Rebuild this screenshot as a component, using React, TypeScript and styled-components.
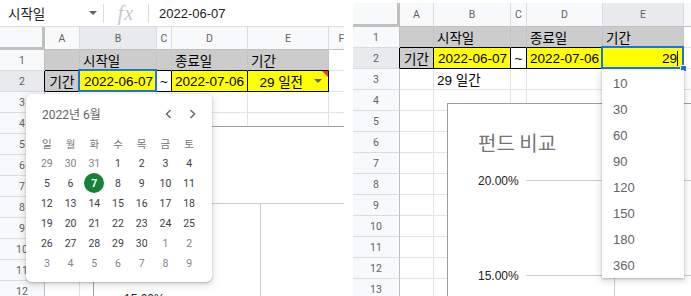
import React from 'react';
import styled, { createGlobalStyle } from 'styled-components';

const Global = createGlobalStyle`
  html, body { margin: 0; padding: 0; background: #fff; }
  body { font-family: "Liberation Sans", Arial, "Noto Sans CJK KR", sans-serif; }
`;

const CELL_FONT = `"Liberation Sans", Arial, "Noto Sans CJK KR", sans-serif`;
const UI_FONT = `Roboto, "Liberation Sans", "Noto Sans CJK KR", sans-serif`;

const Page = styled.div`
  display: flex;
  gap: 9px;
  width: 691px;
  height: 296px;
  overflow: hidden;
`;

const Panel = styled.div<{ $w: number }>`
  flex: none;
  width: ${p => p.$w}px;
  height: 296px;
  display: flex;
  flex-direction: column;
  overflow: hidden;
`;

const TopStrip = styled.div`
  flex: none;
  height: 3px;
`;

/* ---------- formula bar ---------- */
const FormulaBar = styled.div`
  flex: none;
  height: 27px;
  box-sizing: border-box;
  border-bottom: 1px solid #dadce0;
  display: flex;
  align-items: center;
  font-family: ${CELL_FONT};
`;

const NameBox = styled.div`
  width: 103px;
  box-sizing: border-box;
  padding: 0 6px 0 8px;
  display: flex;
  align-items: center;
  justify-content: space-between;
  font-size: 13.5px;
  color: #202124;
`;

const Caret = styled.span<{ $size?: number; $color?: string }>`
  width: 0;
  height: 0;
  border-left: ${p => p.$size ?? 4}px solid transparent;
  border-right: ${p => p.$size ?? 4}px solid transparent;
  border-top: ${p => p.$size ?? 4}px solid ${p => p.$color ?? '#5f6368'};
`;

const BarDivider = styled.div`
  width: 1px;
  height: 19px;
  background: #dadce0;
`;

const FxBox = styled.div`
  width: 44px;
  display: flex;
  justify-content: center;
  font-family: "Liberation Serif", serif;
  font-style: italic;
  font-size: 20px;
  color: #c4c7cc;
  letter-spacing: 1px;
`;

const FormulaText = styled.div`
  padding-left: 10px;
  font-size: 13px;
  color: #202124;
`;

/* ---------- sheet ---------- */
const SheetArea = styled.div`
  position: relative;
  flex: 1;
  overflow: hidden;
`;

const Grid = styled.div<{ $cols: string; $hdr: number }>`
  display: grid;
  grid-template-columns: ${p => p.$cols};
  grid-template-rows: ${p => p.$hdr}px;
  grid-auto-rows: 21px;
  font-family: ${CELL_FONT};
`;

const Corner = styled.div`
  box-sizing: border-box;
  background: #f8f9fa;
  border-right: 3px solid #c0c0c0;
  border-bottom: 3px solid #c0c0c0;
`;

const ColHeader = styled.div<{ $active?: boolean }>`
  box-sizing: border-box;
  background: ${p => (p.$active ? '#e8eaed' : '#f8f9fa')};
  border-right: 1px solid #dadce0;
  border-bottom: 1px solid #c0c0c0;
  display: flex;
  align-items: center;
  justify-content: center;
  font-size: 10.5px;
  color: #5f6368;
  font-family: ${UI_FONT};
`;

const RowHeader = styled.div<{ $active?: boolean; $rc?: string }>`
  box-sizing: border-box;
  background: ${p => (p.$active ? '#e8eaed' : '#f8f9fa')};
  border-right: 1px solid ${p => p.$rc ?? '#c0c0c0'};
  border-bottom: 1px solid #dadce0;
  display: flex;
  align-items: center;
  justify-content: center;
  font-size: 10.5px;
  color: #5f6368;
  font-family: ${UI_FONT};
`;

const Cell = styled.div<{ $bg?: string; $justify?: string; $rc?: string; $bc?: string; $pad?: string; $gap?: number }>`
  position: relative;
  box-sizing: border-box;
  background: ${p => p.$bg ?? '#fff'};
  border-right: 1px solid ${p => p.$rc ?? '#e2e3e3'};
  border-bottom: 1px solid ${p => p.$bc ?? '#e2e3e3'};
  display: flex;
  align-items: center;
  justify-content: ${p => p.$justify ?? 'flex-start'};
  gap: ${p => p.$gap ?? 0}px;
  padding: ${p => p.$pad ?? '0 3px'};
  font-size: 13.5px;
  color: #000;
  white-space: nowrap;
`;

const Selection = styled.span`
  position: absolute;
  top: -2px;
  left: -2px;
  right: -1px;
  bottom: -1px;
  border: 2px solid #1a73e8;
  pointer-events: none;
  z-index: 2;
`;

const FillHandle = styled.span`
  position: absolute;
  right: -4px;
  bottom: -4px;
  width: 5px;
  height: 5px;
  background: #1a73e8;
  border: 1px solid #fff;
  z-index: 3;
`;

const NoteMark = styled.span`
  position: absolute;
  top: 0;
  right: 0;
  width: 0;
  height: 0;
  border-top: 6px solid #ea4335;
  border-left: 6px solid transparent;
`;

const TextCursor = styled.span`
  width: 1px;
  height: 15px;
  background: #000;
`;

/* ---------- calendar ---------- */
const Calendar = styled.div`
  position: absolute;
  left: 26px;
  top: 67px;
  width: 186px;
  height: 188px;
  box-sizing: border-box;
  padding: 0 8px 9px 9px;
  background: #fff;
  border-radius: 6px;
  box-shadow: 0 1px 2px rgba(60, 64, 67, 0.3), 0 2px 6px 2px rgba(60, 64, 67, 0.15);
  z-index: 4;
  font-family: ${UI_FONT};
`;

const CalHeader = styled.div`
  height: 39px;
  display: flex;
  align-items: center;
  padding-left: 7px;
`;

const CalTitle = styled.div`
  font-size: 12px;
  color: #5f6368;
  flex: 1;
`;

const NavButton = styled.div`
  width: 24px;
  height: 24px;
  display: flex;
  align-items: center;
  justify-content: center;
`;

const DayGrid = styled.div`
  width: 166px;
  display: grid;
  grid-template-columns: repeat(7, 1fr);
  grid-auto-rows: 20px;
`;

const Weekday = styled.div`
  display: flex;
  align-items: center;
  justify-content: center;
  font-size: 10.5px;
  color: #70757a;
  font-family: "Noto Sans CJK KR", sans-serif;
`;

const Day = styled.div<{ $muted?: boolean }>`
  display: flex;
  align-items: center;
  justify-content: center;
  font-size: 10.5px;
  color: ${p => (p.$muted ? '#80868b' : '#3c4043')};
`;

const DayDot = styled.span`
  width: 20px;
  height: 20px;
  border-radius: 50%;
  background: #188038;
  color: #fff;
  font-weight: 700;
  display: flex;
  align-items: center;
  justify-content: center;
`;

/* ---------- dropdown ---------- */
const Dropdown = styled.div`
  position: absolute;
  left: 249px;
  top: 67px;
  width: 82px;
  background: #fff;
  box-shadow: 0 1px 2px rgba(60, 64, 67, 0.3), 0 2px 6px 2px rgba(60, 64, 67, 0.15);
  z-index: 4;
`;

const Option = styled.div`
  height: 26px;
  display: flex;
  align-items: center;
  padding-left: 11px;
  font-family: ${CELL_FONT};
  font-size: 13px;
  color: #5f6368;
`;

/* ---------- chart ---------- */
const ChartBox = styled.div`
  position: absolute;
  width: 420px;
  height: 320px;
  background: #fff;
  border-top: 1px solid #9e9e9e;
  border-left: 1px solid #9e9e9e;
  z-index: 1;
`;

const ChartTitle = styled.div`
  padding: 27px 0 0 30px;
  height: 24px;
  line-height: 24px;
  font-family: "Noto Sans CJK KR", sans-serif;
  font-size: 20px;
  color: #757575;
`;

const ChartPlot = styled.svg`
  display: block;
`;

/* ---------- data ---------- */
type CellDef = {
  content?: React.ReactNode;
  bg?: string;
  justify?: string;
  rc?: string;
  bc?: string;
  pad?: string;
  gap?: number;
};

const COLS = ['A', 'B', 'C', 'D', 'E', 'F'];
const GRAY = '#cccccc';
const YELLOW = '#ffff00';
const BLACK = '#000';

function baseCells(): Record<string, CellDef> {
  const c: Record<string, CellDef> = {};
  ['A', 'B', 'C', 'D', 'E'].forEach(k => {
    c[`${k}1`] = { bg: GRAY, rc: '#c4c4c4', bc: BLACK };
  });
  c.B1.content = '시작일';
  c.D1.content = '종료일';
  c.E1.content = '기간';
  c.A2 = { content: '기간', bg: GRAY, justify: 'center', rc: BLACK, bc: BLACK };
  c.B2 = { content: '2022-06-07', bg: YELLOW, justify: 'flex-end', rc: BLACK, bc: BLACK };
  c.C2 = { content: '~', justify: 'center', rc: BLACK, bc: BLACK, pad: '0' };
  c.D2 = { content: '2022-07-06', bg: YELLOW, justify: 'flex-end', rc: BLACK, bc: BLACK };
  c.E2 = { bg: YELLOW, justify: 'flex-end', rc: BLACK, bc: BLACK };
  return c;
}

type SheetProps = {
  widths: number[];
  hdr: number;
  rows: number;
  activeCol: string;
  cells: Record<string, CellDef>;
  children?: React.ReactNode;
};

function Sheet({ widths, hdr, rows, activeCol, cells, children }: SheetProps) {
  const cols = widths.map(w => `${w}px`).join(' ');
  const rowNums = Array.from({ length: rows }, (_, i) => i + 1);
  const chartTop = hdr + 3 * 21 + 13;
  const chartLeft = widths[0] + widths[1] + 13;
  return (
    <SheetArea>
      <Grid $cols={cols} $hdr={hdr}>
        <Corner />
        {COLS.map(k => (
          <ColHeader key={k} $active={k === activeCol}>{k}</ColHeader>
        ))}
        {rowNums.map(r => (
          <React.Fragment key={r}>
            <RowHeader $active={r === 2} $rc={r === 2 ? BLACK : undefined}>{r}</RowHeader>
            {COLS.map(k => {
              const d = cells[`${k}${r}`] ?? {};
              return (
                <Cell
                  key={k}
                  $bg={d.bg}
                  $justify={d.justify}
                  $rc={d.rc}
                  $bc={d.bc}
                  $pad={d.pad}
                  $gap={d.gap}
                >
                  {d.content}
                </Cell>
              );
            })}
          </React.Fragment>
        ))}
      </Grid>
      <Chart top={chartTop} left={chartLeft} />
      {children}
    </SheetArea>
  );
}

function Chart({ top, left }: { top: number; left: number }) {
  return (
    <ChartBox style={{ top, left }}>
      <ChartTitle>펀드 비교</ChartTitle>
      <ChartPlot width="420" height="270" viewBox="0 0 420 270">
        <line x1="78" y1="25.5" x2="420" y2="25.5" stroke="#cccccc" strokeWidth="1" />
        <line x1="78" y1="120.5" x2="420" y2="120.5" stroke="#cccccc" strokeWidth="1" />
        <line x1="166.5" y1="25" x2="166.5" y2="270" stroke="#cccccc" strokeWidth="1" />
        <text x="30" y="30" fontSize="12" fill="#222" fontFamily="Liberation Sans, Arial, sans-serif">20.00%</text>
        <text x="30" y="125" fontSize="12" fill="#222" fontFamily="Liberation Sans, Arial, sans-serif">15.00%</text>
      </ChartPlot>
    </ChartBox>
  );
}

const Chevron = ({ dir }: { dir: 'left' | 'right' }) => (
  <svg width="7" height="10" viewBox="0 0 7 10">
    <path
      d={dir === 'left' ? 'M5.5 1 L1.5 5 L5.5 9' : 'M1.5 1 L5.5 5 L1.5 9'}
      fill="none"
      stroke="#5f6368"
      strokeWidth="1.4"
    />
  </svg>
);

const WEEKDAYS = ['일', '월', '화', '수', '목', '금', '토'];
const DAYS: { d: number; m?: boolean }[] = [
  { d: 29, m: true }, { d: 30, m: true }, { d: 31, m: true }, { d: 1 }, { d: 2 }, { d: 3 }, { d: 4 },
  { d: 5 }, { d: 6 }, { d: 7 }, { d: 8 }, { d: 9 }, { d: 10 }, { d: 11 },
  { d: 12 }, { d: 13 }, { d: 14 }, { d: 15 }, { d: 16 }, { d: 17 }, { d: 18 },
  { d: 19 }, { d: 20 }, { d: 21 }, { d: 22 }, { d: 23 }, { d: 24 }, { d: 25 },
  { d: 26 }, { d: 27 }, { d: 28 }, { d: 29 }, { d: 30 }, { d: 1, m: true }, { d: 2, m: true },
  { d: 3, m: true }, { d: 4, m: true }, { d: 5, m: true }, { d: 6, m: true }, { d: 7, m: true }, { d: 8, m: true }, { d: 9, m: true },
];

function DatePicker() {
  return (
    <Calendar>
      <CalHeader>
        <CalTitle>2022년 6월</CalTitle>
        <NavButton><Chevron dir="left" /></NavButton>
        <NavButton><Chevron dir="right" /></NavButton>
      </CalHeader>
      <DayGrid>
        {WEEKDAYS.map(w => <Weekday key={w}>{w}</Weekday>)}
        {DAYS.map((x, i) => (
          <Day key={i} $muted={x.m}>
            {i === 9 ? <DayDot>{x.d}</DayDot> : x.d}
          </Day>
        ))}
      </DayGrid>
    </Calendar>
  );
}

const OPTIONS = ['10', '30', '60', '90', '120', '150', '180', '360'];

export default function App() {
  const leftCells = baseCells();
  leftCells.B2 = {
    ...leftCells.B2,
    content: (
      <>
        2022-06-07
        <Selection />
      </>
    ),
  };
  leftCells.E2 = {
    ...leftCells.E2,
    pad: '0 6px 0 3px',
    gap: 11,
    content: (
      <>
        <span>29 일전</span>
        <Caret $size={4} $color="#5f6368" />
        <NoteMark />
      </>
    ),
  };

  const rightCells = baseCells();
  rightCells.E2 = {
    ...rightCells.E2,
    pad: '0 5px 0 3px',
    content: (
      <>
        <span>29</span>
        <TextCursor />
        <Selection />
        <FillHandle />
      </>
    ),
  };
  rightCells.B3 = { content: '29 일간' };

  return (
    <>
      <Global />
      <Page>
        <Panel $w={344}>
          <FormulaBar>
            <NameBox>
              <span>시작일</span>
              <Caret $size={4} />
            </NameBox>
            <BarDivider />
            <FxBox>fx</FxBox>
            <BarDivider />
            <FormulaText>2022-06-07</FormulaText>
          </FormulaBar>
          <Sheet widths={[45, 35, 77, 15, 76, 81, 26]} hdr={23} rows={12} activeCol="B" cells={leftCells}>
            <DatePicker />
          </Sheet>
        </Panel>
        <Panel $w={338}>
          <TopStrip />
          <Sheet widths={[47, 34, 77, 16, 76, 81, 40]} hdr={24} rows={13} activeCol="E" cells={rightCells}>
            <Dropdown>
              {OPTIONS.map(o => <Option key={o}>{o}</Option>)}
            </Dropdown>
          </Sheet>
        </Panel>
      </Page>
    </>
  );
}
